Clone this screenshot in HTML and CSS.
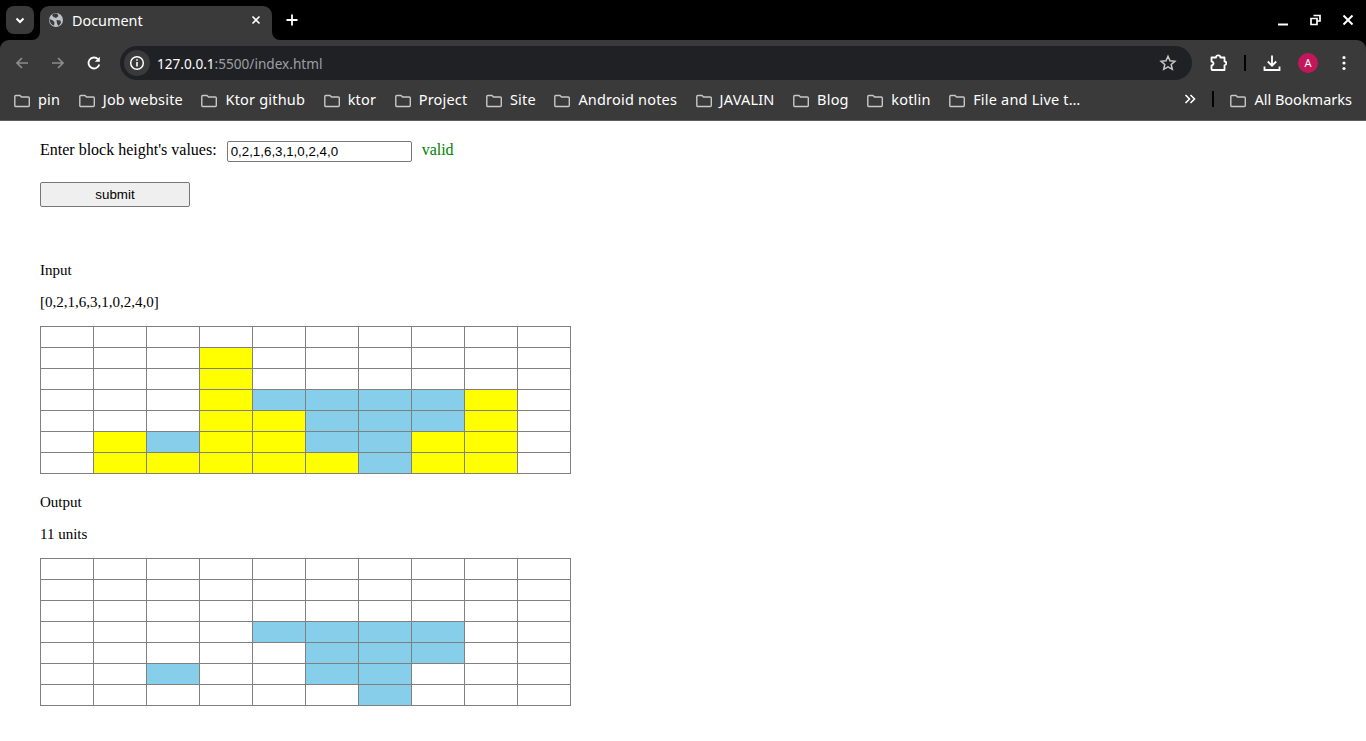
FILE: index.html
```html
<!DOCTYPE html>
<html lang="en">

<head>
    <meta charset="UTF-8">
    <title>Document</title>
    <link rel="stylesheet" href="styles.css">
</head>

<body>
    <svg class="icon-defs" width="0" height="0">
        <symbol id="folder" viewBox="0 0 16 16">
            <path d="M.8 4.500a1 1 0 0 1 1-1H6L7.500 5H14.300a1 1 0 0 1 1 1v7.500a1 1 0 0 1-1 1H1.800a1 1 0 0 1-1-1z"/>
        </symbol>
    </svg>

    <div class="browser">
        <div class="tabstrip">
            <div class="tab-search">
                <svg width="16" height="16" viewBox="0 0 16 16"><path d="M4.500 6.500 8 10l3.500-3.500" fill="none" stroke="#fff" stroke-width="2"/></svg>
            </div>
            <div class="tab">
                <svg class="favicon" width="16" height="16" viewBox="0 0 16 16"><circle cx="8" cy="8" r="7" fill="#bdc1c6"/><path d="M9 1.500 10.500 4 8 6 5.500 5 4 3 6 1.500zM8.500 8l4 .5.500 2.500-2.500 3-1.500-2.500zM1.500 7 5 8.500l1.500 2-.5 3C3.500 13 1.500 10 1.500 7z" fill="#3a3a3a"/></svg>
                <span class="tab-title">Document</span>
                <svg class="tab-close" width="16" height="16" viewBox="0 0 16 16"><path d="M4.500 4.500l7 7m0-7-7 7" stroke="#fff" stroke-width="1.600"/></svg>
            </div>
            <svg class="new-tab" width="16" height="16" viewBox="0 0 16 16"><path d="M8 2.500v11M2.500 8h11" stroke="#fff" stroke-width="1.800"/></svg>
            <div class="window-buttons">
                <svg width="16" height="16" viewBox="0 0 16 16"><path d="M2 12.500h10" stroke="#fff" stroke-width="2"/></svg>
                <svg width="16" height="16" viewBox="0 0 16 16"><path d="M5.500 3.500H12V9H9.500M3 6.500H9V12.500H3z" fill="none" stroke="#fff" stroke-width="1.700"/></svg>
                <svg width="16" height="16" viewBox="0 0 16 16"><path d="M3.500 3.500l9 9m0-9-9 9" stroke="#fff" stroke-width="2"/></svg>
            </div>
        </div>
        <div class="toolbar">
            <svg class="nav-icon" width="16" height="16" viewBox="0 0 16 16"><path d="M14 8H3M8 3 3 8l5 5" fill="none" stroke="#8b8c8e" stroke-width="1.700"/></svg>
            <svg class="nav-icon" width="16" height="16" viewBox="0 0 16 16"><path d="M2 8h11M8 3l5 5-5 5" fill="none" stroke="#8b8c8e" stroke-width="1.700"/></svg>
            <svg class="nav-icon" width="16" height="16" viewBox="0 0 16 16"><path d="M13.300 9.500A5.500 5.500 0 1 1 12 4.200" fill="none" stroke="#fff" stroke-width="1.800"/><path d="M13.800 1.800v5h-5z" fill="#fff"/></svg>
            <div class="omnibox">
                <div class="site-info">
                    <svg width="16" height="16" viewBox="0 0 16 16"><circle cx="8" cy="8" r="6.300" fill="none" stroke="#fff" stroke-width="1.500"/><path d="M8 7v4.500M8 4.300v1.500" stroke="#fff" stroke-width="1.600"/></svg>
                </div>
                <div class="url"><span class="host">127.0.0.1</span>:5500/index.html</div>
                <svg class="star" width="18" height="18" viewBox="0 0 18 18"><path d="m9 2.300 2 4.500 4.900.5-3.700 3.200 1.100 4.800L9 12.800l-4.300 2.500 1.100-4.800-3.700-3.200L7 6.800z" fill="none" stroke="#c7c7c7" stroke-width="1.500"/></svg>
            </div>
            <svg class="ext" width="18" height="18" viewBox="0 0 18 18"><path d="M2.500 3.500H7a2.200 2.200 0 0 1 4.400 0h4.100v4a1.800 1.800 0 0 1 0 3.600V16h-12a1 1 0 0 1-1-1v-3.500a2 2 0 0 0 0-4z" fill="none" stroke="#fff" stroke-width="1.800" stroke-linejoin="round"/></svg>
            <div class="divider"></div>
            <svg class="download" width="18" height="18" viewBox="0 0 18 18"><path d="M9 1.500v10M4.800 7.500 9 11.700l4.200-4.200M1.500 12.500v3.500h15v-3.500" fill="none" stroke="#fff" stroke-width="1.800"/></svg>
            <div class="avatar">A</div>
            <svg class="dots" width="16" height="16" viewBox="0 0 16 16"><circle cx="8" cy="2.500" r="1.600" fill="#fff"/><circle cx="8" cy="8" r="1.600" fill="#fff"/><circle cx="8" cy="13.500" r="1.600" fill="#fff"/></svg>
        </div>
        <div class="bookmarks">
            <div class="bm"><svg class="folder" width="16" height="16"><use href="#folder"/></svg>pin</div>
            <div class="bm"><svg class="folder" width="16" height="16"><use href="#folder"/></svg>Job website</div>
            <div class="bm"><svg class="folder" width="16" height="16"><use href="#folder"/></svg>Ktor github</div>
            <div class="bm"><svg class="folder" width="16" height="16"><use href="#folder"/></svg>ktor</div>
            <div class="bm"><svg class="folder" width="16" height="16"><use href="#folder"/></svg>Project</div>
            <div class="bm"><svg class="folder" width="16" height="16"><use href="#folder"/></svg>Site</div>
            <div class="bm"><svg class="folder" width="16" height="16"><use href="#folder"/></svg>Android notes</div>
            <div class="bm"><svg class="folder" width="16" height="16"><use href="#folder"/></svg>JAVALIN</div>
            <div class="bm"><svg class="folder" width="16" height="16"><use href="#folder"/></svg>Blog</div>
            <div class="bm"><svg class="folder" width="16" height="16"><use href="#folder"/></svg>kotlin</div>
            <div class="bm"><svg class="folder" width="16" height="16"><use href="#folder"/></svg>File and Live t…</div>
            <div class="bm-right">
                <svg class="more" width="12" height="12" viewBox="0 0 12 12"><path d="M1.500 2l4 4-4 4M6.500 2l4 4-4 4" fill="none" stroke="#fff" stroke-width="1.600"/></svg>
                <div class="divider"></div>
                <div class="bm all-bookmarks"><svg class="folder" width="16" height="16"><use href="#folder"/></svg>All Bookmarks</div>
            </div>
        </div>
    </div>

    <div class="page">
        <form class="height-form">
            <div class="input-row">
                <label for="heights">Enter block height's values:</label>
                <input type="text" id="heights" value="0,2,1,6,3,1,0,2,4,0">
                <span class="status">valid</span>
            </div>
            <button type="button" class="submit-btn">submit</button>
        </form>

        <p class="heading">Input</p>
        <p>[0,2,1,6,3,1,0,2,4,0]</p>
        <table class="grid">
            <tr><td></td><td></td><td></td><td></td><td></td><td></td><td></td><td></td><td></td><td></td></tr>
            <tr><td></td><td></td><td></td><td class="block"></td><td></td><td></td><td></td><td></td><td></td><td></td></tr>
            <tr><td></td><td></td><td></td><td class="block"></td><td></td><td></td><td></td><td></td><td></td><td></td></tr>
            <tr><td></td><td></td><td></td><td class="block"></td><td class="water"></td><td class="water"></td><td class="water"></td><td class="water"></td><td class="block"></td><td></td></tr>
            <tr><td></td><td></td><td></td><td class="block"></td><td class="block"></td><td class="water"></td><td class="water"></td><td class="water"></td><td class="block"></td><td></td></tr>
            <tr><td></td><td class="block"></td><td class="water"></td><td class="block"></td><td class="block"></td><td class="water"></td><td class="water"></td><td class="block"></td><td class="block"></td><td></td></tr>
            <tr><td></td><td class="block"></td><td class="block"></td><td class="block"></td><td class="block"></td><td class="block"></td><td class="water"></td><td class="block"></td><td class="block"></td><td></td></tr>
        </table>

        <p class="heading-output">Output</p>
        <p>11 units</p>
        <table class="grid">
            <tr><td></td><td></td><td></td><td></td><td></td><td></td><td></td><td></td><td></td><td></td></tr>
            <tr><td></td><td></td><td></td><td></td><td></td><td></td><td></td><td></td><td></td><td></td></tr>
            <tr><td></td><td></td><td></td><td></td><td></td><td></td><td></td><td></td><td></td><td></td></tr>
            <tr><td></td><td></td><td></td><td></td><td class="water"></td><td class="water"></td><td class="water"></td><td class="water"></td><td></td><td></td></tr>
            <tr><td></td><td></td><td></td><td></td><td></td><td class="water"></td><td class="water"></td><td class="water"></td><td></td><td></td></tr>
            <tr><td></td><td></td><td class="water"></td><td></td><td></td><td class="water"></td><td class="water"></td><td></td><td></td><td></td></tr>
            <tr><td></td><td></td><td></td><td></td><td></td><td></td><td class="water"></td><td></td><td></td><td></td></tr>
        </table>
    </div>
</body>

</html>
```
FILE: styles.css
```css
* {
    box-sizing: border-box;
}

html, body {
    height: 100%;
}

body {
    margin: 0;
    background-color: #FFFFFF;
    color: #000;
    font-family: "Liberation Serif", serif;
    font-size: 15px;
    overflow: hidden;
}

.icon-defs {
    display: block;
    height: 0;
}

/* Browser window */
.browser {
    height: 121px;
    background-color: #000;
    font-family: "Noto Sans", sans-serif;
    color: #fff;
}

.tabstrip {
    height: 40px;
    display: flex;
    align-items: flex-end;
    padding-left: 6px;
}

.tab-search {
    width: 28px;
    height: 28px;
    margin-bottom: 6px;
    border-radius: 8px;
    background-color: #3a3a3a;
    display: flex;
    align-items: center;
    justify-content: center;
}

.tab {
    position: relative;
    width: 232px;
    height: 34px;
    margin-left: 6px;
    padding: 0 8px 6px;
    background-color: #3a3a3a;
    border-radius: 9px 9px 0 0;
    display: flex;
    align-items: center;
    font-size: 14.4px;
}

.tab::before,
.tab::after {
    content: "";
    position: absolute;
    bottom: 0;
    width: 8px;
    height: 8px;
    background-color: #3a3a3a;
}

.tab::before {
    left: -8px;
    clip-path: path("M8 0V8H0A8 8 0 0 0 8 0Z");
}

.tab::after {
    right: -8px;
    clip-path: path("M0 0V8H8A8 8 0 0 1 0 0Z");
}

.tab-title {
    margin-left: 8px;
    flex: 1;
}

.new-tab {
    margin: 0 0 12px 12px;
}

.window-buttons {
    margin-left: auto;
    margin-bottom: 12px;
    padding-right: 10px;
    display: flex;
    gap: 16px;
}

.toolbar {
    height: 40px;
    padding: 6px 14px 0 14px;
    background-color: #3a3a3a;
    border-radius: 9px 9px 0 0;
    display: flex;
    align-items: flex-start;
}

.nav-icon {
    margin: 9px 20px 0 0;
}

.nav-icon:nth-child(3) {
    margin-right: 18px;
}

.omnibox {
    width: 1072px;
    height: 34px;
    padding: 0 15px 0 4px;
    border-radius: 17px;
    background-color: #202124;
    display: flex;
    align-items: center;
}

.site-info {
    width: 26px;
    height: 26px;
    border-radius: 50%;
    background-color: #3a3a3a;
    display: flex;
    align-items: center;
    justify-content: center;
}

.url {
    margin-left: 7px;
    flex: 1;
    font-size: 13.6px;
    color: #9aa0a6;
}

.host {
    color: #fff;
}

.ext {
    margin: 8px 0 0 17px;
}

.toolbar .divider {
    margin: 9px 17px 0 17px;
}

.divider {
    width: 2px;
    height: 16px;
    background-color: #000;
}

.download {
    margin-top: 8px;
}

.avatar {
    width: 20px;
    height: 20px;
    margin: 7px 0 0 17px;
    border-radius: 50%;
    background-color: #c2185b;
    font-size: 11px;
    line-height: 20px;
    text-align: center;
}

.dots {
    margin: 9px 0 0 18px;
}

.bookmarks {
    height: 41px;
    padding: 0 14px 3px 14px;
    background-color: #3a3a3a;
    border-bottom: 1px solid #5f5f5f;
    display: flex;
    align-items: center;
    gap: 18.5px;
    font-size: 14.5px;
    letter-spacing: .2px;
}

.bm {
    display: flex;
    align-items: center;
    gap: 8px;
    white-space: nowrap;
}

.all-bookmarks {
    letter-spacing: 0;
}

.folder {
    flex-shrink: 0;
    fill: none;
    stroke: #c7c7c7;
    stroke-width: 1.4;
    margin-top: 2px;
}

.bm-right {
    margin-left: auto;
    display: flex;
    align-items: center;
    gap: 16px;
}

/* Page content */
.page {
    padding: 20px 0 0 40px;
}

.input-row {
    display: flex;
    align-items: center;
    height: 21px;
}

.input-row label,
.status {
    font-size: 16px;
    margin-bottom: 4px;
}

.input-row input {
    width: 185px;
    height: 21px;
    margin-left: 10px;
    padding: 1px 3px;
    border: 1px solid #767676;
    border-radius: 2px;
    font-family: "Liberation Sans", sans-serif;
    font-size: 13.333px;
}

.status {
    margin-left: 10px;
    color: green;
}

.submit-btn {
    display: block;
    width: 150px;
    height: 25px;
    margin-top: 20px;
    border: 1px solid #767676;
    border-radius: 2px;
    background-color: #efefef;
    font-family: "Liberation Sans", sans-serif;
    font-size: 13.333px;
}

.page p {
    margin: 15px 0;
}

.page p.heading {
    margin-top: 55px;
}

.page p.heading-output {
    margin-top: 20px;
}

.grid {
    border-collapse: collapse;
    table-layout: fixed;
    width: 531px;
}

.grid td {
    height: 21px;
    padding: 0;
    border: 1px solid gray;
}

.block {
    background-color: yellow;
}

.water {
    background-color: skyblue;
}
```
